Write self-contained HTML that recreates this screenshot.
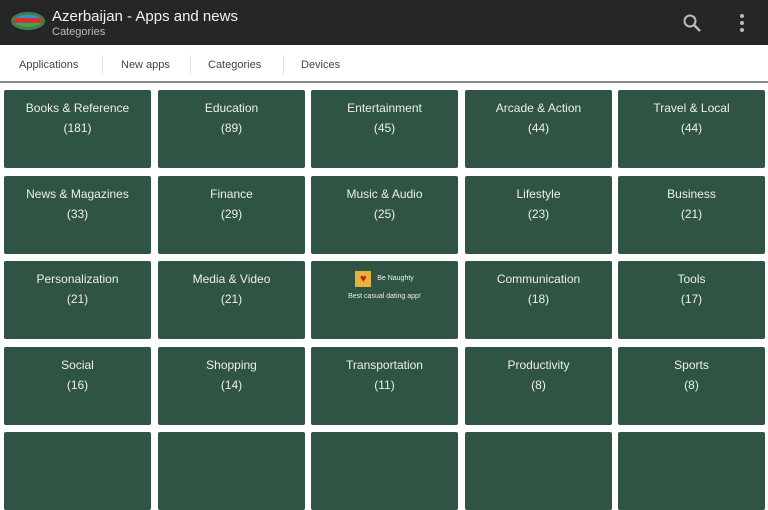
<!DOCTYPE html>
<html><head><style>
*{margin:0;padding:0;box-sizing:border-box}
body{width:768px;height:441px;overflow:hidden;background:#fff;font-family:"Liberation Sans",sans-serif;position:relative}
.hdr{position:absolute;left:0;top:0;width:768px;height:45px;background:#262626}
.t1{position:absolute;left:52px;top:8px;color:#f2f2f2;font-size:15px}
.t2{position:absolute;left:52px;top:26px;color:#bdbdbd;font-size:11px}
.tabs{position:absolute;left:0;top:45px;width:768px;height:38px;background:#fff;border-bottom:2px solid #8a8a8a}
.tab{position:absolute;top:14px;font-size:11px;color:#444}
.sep{position:absolute;top:10px;width:1px;height:20px;background:#e2e2e2}
.tile{position:absolute;width:147px;height:78px;background:#2f5443;border-radius:2px;color:#eee;text-align:center;font-size:12px;line-height:20px;padding-top:8px}
</style></head><body>
<div class="hdr">
<svg style="position:absolute;left:10px;top:11px" width="36" height="20" viewBox="0 0 36 20"><ellipse cx="18" cy="10" rx="17" ry="9" fill="#3f7f4f"/><clipPath id="c"><ellipse cx="18" cy="10" rx="14" ry="6"/></clipPath><g clip-path="url(#c)"><rect x="0" y="0" width="36" height="7" fill="#3a8fd0"/><rect x="0" y="7" width="36" height="5" fill="#d8322e"/><rect x="0" y="12" width="36" height="8" fill="#3fa650"/></g></svg>
<div class="t1">Azerbaijan - Apps and news</div>
<div class="t2">Categories</div>
<svg style="position:absolute;left:682px;top:13px" width="20" height="20" viewBox="0 0 20 20"><circle cx="8" cy="8" r="5.5" fill="none" stroke="#bbb" stroke-width="2"/><path d="M12 12l6 6" stroke="#bbb" stroke-width="2.5"/></svg>
<svg style="position:absolute;left:738px;top:13px" width="8" height="20" viewBox="0 0 8 20"><circle cx="4" cy="3" r="2" fill="#bbb"/><circle cx="4" cy="10" r="2" fill="#bbb"/><circle cx="4" cy="17" r="2" fill="#bbb"/></svg>
</div>
<div class="tabs">
<div class="tab" style="left:19px">Applications</div><div class="sep" style="left:102px"></div>
<div class="tab" style="left:121px">New apps</div><div class="sep" style="left:190px"></div>
<div class="tab" style="left:208px">Categories</div><div class="sep" style="left:283px"></div>
<div class="tab" style="left:301px">Devices</div>
</div>
<div class="tile" style="left:4px;top:90px">Books &amp; Reference<br>(181)</div>
<div class="tile" style="left:158px;top:90px">Education<br>(89)</div>
<div class="tile" style="left:311px;top:90px">Entertainment<br>(45)</div>
<div class="tile" style="left:465px;top:90px">Arcade &amp; Action<br>(44)</div>
<div class="tile" style="left:618px;top:90px">Travel &amp; Local<br>(44)</div>
<div class="tile" style="left:4px;top:176px">News &amp; Magazines<br>(33)</div>
<div class="tile" style="left:158px;top:176px">Finance<br>(29)</div>
<div class="tile" style="left:311px;top:176px">Music &amp; Audio<br>(25)</div>
<div class="tile" style="left:465px;top:176px">Lifestyle<br>(23)</div>
<div class="tile" style="left:618px;top:176px">Business<br>(21)</div>
<div class="tile" style="left:4px;top:261px">Personalization<br>(21)</div>
<div class="tile" style="left:158px;top:261px">Media &amp; Video<br>(21)</div>
<div class="tile" style="left:311px;top:261px;padding-top:10px;font-size:7px;line-height:12px">
<div style="display:flex;align-items:center;justify-content:center;gap:6px"><span style="display:inline-block;width:16px;height:16px;background:#e8b23a;color:#c0201b;font-size:11px;line-height:16px">♥</span><span>Be Naughty</span></div>
<div style="margin-top:4px">Best casual dating app!</div></div>
<div class="tile" style="left:465px;top:261px">Communication<br>(18)</div>
<div class="tile" style="left:618px;top:261px">Tools<br>(17)</div>
<div class="tile" style="left:4px;top:347px">Social<br>(16)</div>
<div class="tile" style="left:158px;top:347px">Shopping<br>(14)</div>
<div class="tile" style="left:311px;top:347px">Transportation<br>(11)</div>
<div class="tile" style="left:465px;top:347px">Productivity<br>(8)</div>
<div class="tile" style="left:618px;top:347px">Sports<br>(8)</div>
<div class="tile" style="left:4px;top:432px"></div>
<div class="tile" style="left:158px;top:432px"></div>
<div class="tile" style="left:311px;top:432px"></div>
<div class="tile" style="left:465px;top:432px"></div>
<div class="tile" style="left:618px;top:432px"></div>
</body></html>
